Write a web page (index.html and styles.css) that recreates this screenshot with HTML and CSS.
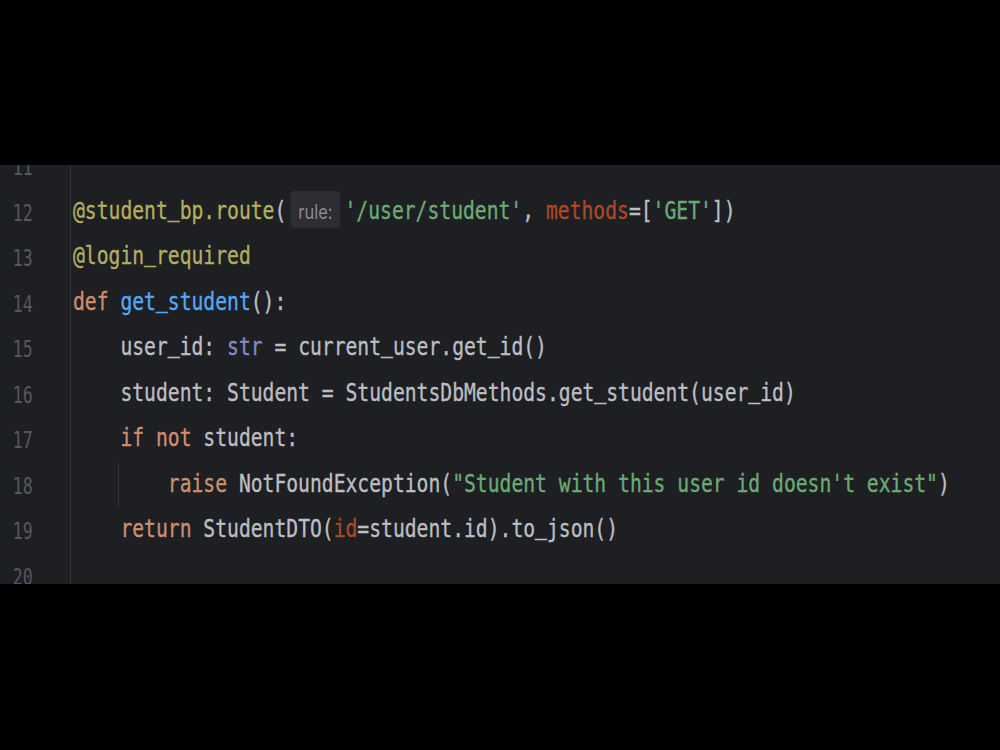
FILE: index.html
```html
<!DOCTYPE html>
<html lang="en">
<head>
<meta charset="utf-8">
<title>student_bp.py</title>
<link rel="stylesheet" href="styles.css">
</head>
<body>
<div class="screen">
  <div class="letterbox"></div>
  <div class="editor">
    <div class="lines">
      <div class="row"><div class="num"><span class="n">11</span></div><div class="code"></div></div>
      <div class="row"><div class="num"><span class="n">12</span></div><div class="code"><span class="txt"><span class="dec">@student<span class="u">_</span>bp.route</span>(<span class="hint">rule:</span><span class="str">'/user/student'</span>, <span class="arg">methods</span>=[<span class="str">'GET'</span>])</span></div></div>
      <div class="row"><div class="num"><span class="n">13</span></div><div class="code"><span class="txt"><span class="dec">@login<span class="u">_</span>required</span></span></div></div>
      <div class="row"><div class="num"><span class="n">14</span></div><div class="code"><span class="txt"><span class="kw">def</span> <span class="fn">get<span class="u">_</span>student</span>():</span></div></div>
      <div class="row"><div class="num"><span class="n">15</span></div><div class="code"><span class="txt">    user<span class="u">_</span>id: <span class="bi">str</span> = current<span class="u">_</span>user.get<span class="u">_</span>id()</span></div></div>
      <div class="row"><div class="num"><span class="n">16</span></div><div class="code"><span class="txt">    student: Student = StudentsDbMethods.get<span class="u">_</span>student(user<span class="u">_</span>id)</span></div></div>
      <div class="row"><div class="num"><span class="n">17</span></div><div class="code"><span class="txt">    <span class="kw">if not</span> student:</span></div></div>
      <div class="row"><div class="num"><span class="n">18</span></div><div class="code guide"><span class="txt">        <span class="kw">raise</span> NotFoundException(<span class="str">"Student with this user id doesn't exist"</span>)</span></div></div>
      <div class="row"><div class="num"><span class="n">19</span></div><div class="code"><span class="txt">    <span class="kw">return</span> StudentDTO(<span class="arg">id</span>=student.id).to<span class="u">_</span>json()</span></div></div>
      <div class="row"><div class="num"><span class="n">20</span></div><div class="code"></div></div>
    </div>
  </div>
  <div class="letterbox bottom"></div>
</div>
</body>
</html>
```
FILE: styles.css
```css
* { box-sizing: border-box; }
html, body { margin: 0; padding: 0; background: #000; }
.screen {
  width: 1000px;
  height: 750px;
  display: flex;
  flex-direction: column;
  background: #000;
  overflow: hidden;
}
.letterbox { height: 165px; flex: none; background: #000; }
.letterbox.bottom { flex: 1; height: auto; }
.editor {
  height: 419px;
  flex: none;
  background: #1e1f22;
  overflow: hidden;
}
.lines { margin-top: -22px; }
.row {
  display: grid;
  grid-template-columns: 71px minmax(0, 1fr);
  height: 45.5px;
  font-family: "DejaVu Sans Mono", "Liberation Mono", monospace;
  font-size: 24px;
  line-height: 45.5px;
  color: #bcbec4;
}
.num {
  border-right: 1px solid #303236;
  text-align: right;
  padding-right: 37px;
  color: #55585e;
  font-size: 23px;
}
.n {
  display: inline-block;
  transform: scaleX(0.72);
  transform-origin: 100% 50%;
  position: relative;
  top: 2px;
}
.code {
  padding-left: 2px;
  white-space: pre;
}
.code.guide {
  background: linear-gradient(#303236, #303236) 47px 0 / 1px 100% no-repeat;
}
.txt {
  display: inline-block;
  white-space: pre;
  transform: scaleX(0.82);
  transform-origin: 0 50%;
  -webkit-text-stroke: 0.35px currentColor;
}
.u {
  line-height: 0;
  vertical-align: 3px;
  -webkit-text-stroke: 0.6px currentColor;
}
.dec { color: #b3ae60; }
.kw { color: #cf8e6d; }
.fn { color: #56a8f5; }
.str { color: #6aab73; }
.bi { color: #8888c6; }
.arg { color: #aa4926; }
.hint {
  display: inline-block;
  margin: 0 5px;
  width: 61px;
  height: 37px;
  padding: 9.7px 0 5.3px;
  text-align: center;
  font-family: Inter, "Noto Sans", sans-serif;
  font-size: 20px;
  line-height: 22px;
  color: #868a91;
  background: #2c2e32;
  border-radius: 5px;
  vertical-align: baseline;
  -webkit-text-stroke: 0;
}
```
